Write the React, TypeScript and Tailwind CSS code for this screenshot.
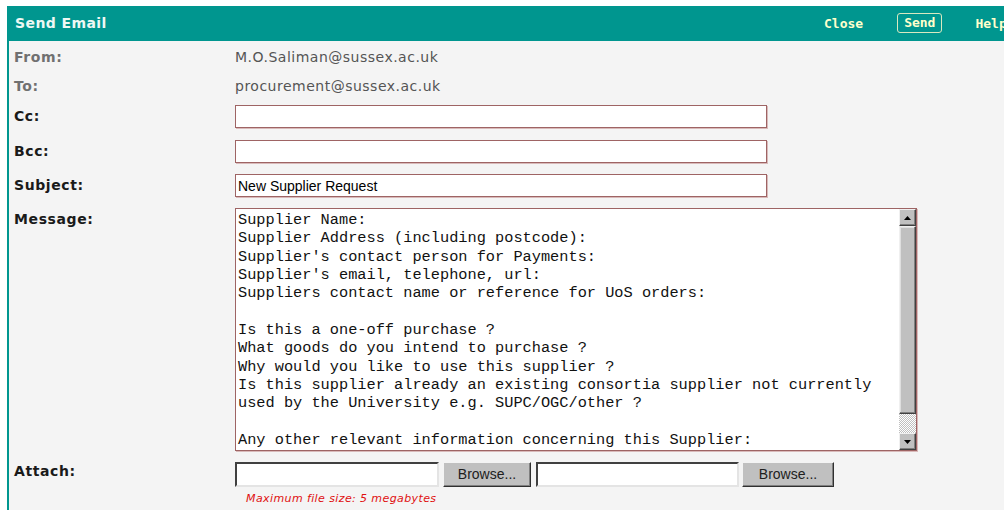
import React from "react";

const labelFont = { fontFamily: '"DejaVu Sans", Verdana, sans-serif' };

const messageText = [
  "Supplier Name:",
  "Supplier Address (including postcode):",
  "Supplier's contact person for Payments:",
  "Supplier's email, telephone, url:",
  "Suppliers contact name or reference for UoS orders:",
  "",
  "Is this a one-off purchase ?",
  "What goods do you intend to purchase ?",
  "Why would you like to use this supplier ?",
  "Is this supplier already an existing consortia supplier not currently",
  "used by the University e.g. SUPC/OGC/other ?",
  "",
  "Any other relevant information concerning this Supplier:",
].join("\n");

function Label({ children, muted }: { children: React.ReactNode; muted?: boolean }) {
  return (
    <div
      className={`w-[221px] shrink-0 text-[14px] font-bold tracking-[0.6px] ${muted ? "text-[#707070]" : "text-[#1a1a1a]"}`}
      style={labelFont}
    >
      {children}
    </div>
  );
}

function TextInput({ value }: { value?: string }) {
  return (
    <input
      readOnly
      defaultValue={value}
      className="h-[23px] w-[532px] bg-white border border-[#9e6464] shadow-[1px_1px_0_#d9baba] px-[2px] text-[14px] text-black outline-none font-['Liberation_Sans',Arial,sans-serif]"
    />
  );
}

function ArrowBtn({ down }: { down?: boolean }) {
  return (
    <div className="h-[17px] w-[17px] bg-[#c0c0c0] border-t border-l border-[#f0f0f0] border-r border-b border-r-[#404040] border-b-[#404040] shadow-[inset_-1px_-1px_0_#808080] flex items-center justify-center">
      <svg width="7" height="4" viewBox="0 0 7 4">
        {down ? <polygon points="0,0 7,0 3.5,4" fill="#000" /> : <polygon points="3.5,0 7,4 0,4" fill="#000" />}
      </svg>
    </div>
  );
}

function Scrollbar() {
  return (
    <div className="w-[17px] shrink-0 flex flex-col bg-[repeating-conic-gradient(#c0c0c0_0_25%,#ffffff_0_50%)] bg-[length:2px_2px]">
      <ArrowBtn />
      <div className="h-[188px] bg-[#c0c0c0] border-t border-l border-[#f0f0f0] border-r border-b border-r-[#404040] border-b-[#404040] shadow-[inset_-1px_-1px_0_#808080,inset_1px_1px_0_#dfdfdf]" />
      <div className="flex-1" />
      <ArrowBtn down />
    </div>
  );
}

function FileInput({ inputW, btnW, btnGap }: { inputW: string; btnW: string; btnGap: string }) {
  return (
    <div className="flex items-center">
      <input
        readOnly
        className={`h-[25px] ${inputW} bg-white border-2 border-t-[#404040] border-l-[#404040] border-r-[#e4e4e4] border-b-[#e4e4e4] outline-none`}
      />
      <button
        className={`${btnGap} h-[25px] ${btnW} bg-[#c0c0c0] border border-t-[#f4f4f4] border-l-[#f4f4f4] border-r-[#303030] border-b-[#303030] shadow-[inset_-1px_-1px_0_#808080] text-[14px] text-[#202020] font-['Liberation_Sans',Arial,sans-serif]`}
      >
        Browse...
      </button>
    </div>
  );
}

export default function App() {
  return (
    <div className="w-[1004px] h-[510px] overflow-hidden bg-white pt-[6px] pl-[7px]">
      <div className="h-full bg-[#f4f4f4] border-l-2 border-[#00968f]">
        {/* title bar */}
        <div className="h-[35px] -ml-[2px] bg-[#00968f] flex items-center whitespace-nowrap overflow-hidden">
          <div className="w-[817px] shrink-0 pl-[8px] text-[14px] font-bold text-[#eef8f4] tracking-[0.4px]" style={labelFont}>
            Send Email
          </div>
          <div className="flex items-center text-[13px] font-bold text-[#ffffcc] font-['DejaVu_Sans_Mono',monospace]">
            <span>Close</span>
            <span className="ml-[34px] h-[20px] px-[6px] border border-[#d8e8c0] rounded-[3px] flex items-center -mt-[1px]">Send</span>
            <span className="ml-[33px]">Help</span>
          </div>
        </div>

        <div className="pl-[5px]">
          <div className="h-[32px] flex items-center">
            <Label muted>From:</Label>
            <div className="text-[14px] tracking-[0.5px] text-[#555555]" style={labelFont}>M.O.Saliman@sussex.ac.uk</div>
          </div>
          <div className="h-[26px] flex items-center">
            <Label muted>To:</Label>
            <div className="text-[14px] tracking-[0.5px] text-[#555555]" style={labelFont}>procurement@sussex.ac.uk</div>
          </div>
          <div className="h-[35px] flex items-center">
            <Label>Cc:</Label>
            <TextInput />
          </div>
          <div className="h-[34px] flex items-center">
            <Label>Bcc:</Label>
            <TextInput />
          </div>
          <div className="h-[35px] flex items-center">
            <Label>Subject:</Label>
            <TextInput value="New Supplier Request" />
          </div>
          <div className="flex items-start mt-[5px]">
            <div className="pt-[1px]">
              <Label>Message:</Label>
            </div>
            <div className="h-[243px] w-[682px] flex bg-white border border-[#9e6464] shadow-[1px_1px_0_#d9baba]">
              <textarea
                readOnly
                defaultValue={messageText}
                className="flex-1 resize-none overflow-hidden bg-white pl-[2px] pt-[2px] text-[15.3px] leading-[18.33px] text-[#111] outline-none whitespace-pre font-['Liberation_Mono','Courier_New',monospace]"
              />
              <Scrollbar />
            </div>
          </div>
          <div className="flex items-start mt-[11px]">
            <div className="-mt-[1px]">
              <Label>Attach:</Label>
            </div>
            <div className="flex flex-col">
              <div className="flex items-center">
                <FileInput inputW="w-[204px]" btnW="w-[88px]" btnGap="ml-[4px]" />
                <div className="ml-[5px]">
                  <FileInput inputW="w-[203px]" btnW="w-[92px]" btnGap="ml-[3px]" />
                </div>
              </div>
              <div
                className="ml-[11px] mt-[4px] text-[11px] italic text-[#e01010] tracking-[0.4px]"
                style={labelFont}
              >
                Maximum file size: 5 megabytes
              </div>
            </div>
          </div>
        </div>
      </div>
    </div>
  );
}
